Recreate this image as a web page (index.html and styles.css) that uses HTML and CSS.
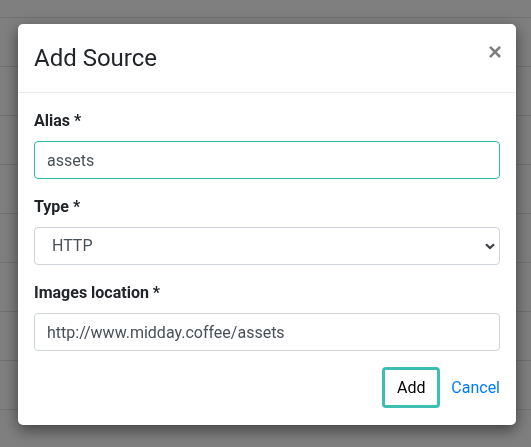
FILE: index.html
```html
<!DOCTYPE html>
<html lang="en">
<head>
<meta charset="utf-8">
<title>Add Source</title>
<link rel="stylesheet" href="styles.css">
</head>
<body>
<div class="page">
  <div class="row"></div>
  <div class="row"></div>
  <div class="row"></div>
  <div class="row"></div>
  <div class="row"></div>
  <div class="row"></div>
  <div class="row"></div>
  <div class="row"></div>
  <div class="row"></div>
</div>
<div class="backdrop"></div>
<div class="modal">
  <div class="modal-dialog">
    <div class="modal-header">
      <h4 class="modal-title">Add Source</h4>
      <button class="close" type="button" aria-label="Close">×</button>
    </div>
    <form class="modal-body">
      <div class="form-group">
        <label class="label" for="alias">Alias *</label>
        <input id="alias" class="form-control focused" type="text" value="assets">
      </div>
      <div class="form-group">
        <label class="label" for="type">Type *</label>
        <div class="select-wrap">
          <select id="type" class="form-control select">
            <option>HTTP</option>
          </select>
          <svg class="chevron" width="10" height="7" viewBox="0 0 10 7"><path d="M1 1.2 L5 5 L9 1.2" fill="none" stroke="#3b3f44" stroke-width="2.2"/></svg>
        </div>
      </div>
      <div class="form-group">
        <label class="label" for="loc">Images location *</label>
        <input id="loc" class="form-control" type="text" value="http://www.midday.coffee/assets">
      </div>
      <div class="actions">
        <button class="btn-add" type="button">Add</button>
        <a class="cancel" href="#">Cancel</a>
      </div>
    </form>
  </div>
</div>
</body>
</html>
```

FILE: styles.css
```css
* { box-sizing: border-box; }
html, body { margin: 0; padding: 0; }
body {
  font-family: Roboto, "Liberation Sans", sans-serif;
  font-size: 16px;
  line-height: 1.5;
  color: #212529;
  background: #fff;
  width: 531px;
  height: 447px;
  overflow: hidden;
}
.page {
  height: 447px;
  overflow: hidden;
  padding-top: 17px;
}
.row {
  height: 49px;
  border-top: 1px solid #dee2e6;
}
.backdrop {
  position: fixed;
  inset: 0;
  background: rgba(0, 0, 0, 0.5);
}
.modal {
  position: fixed;
  inset: 0;
  display: flex;
  align-items: flex-start;
  padding: 24px 0 0 18px;
}
.modal-dialog {
  width: 498px;
  background: #fff;
  border-radius: 5px;
  box-shadow: 0 5px 15px rgba(0, 0, 0, 0.5);
}
.modal-header {
  display: flex;
  align-items: flex-start;
  justify-content: space-between;
  padding: 16px;
  border-bottom: 1px solid #e9ecef;
}
.modal-title {
  margin: 0;
  font-size: 24px;
  font-weight: 400;
  line-height: 36px;
}
.close {
  background: none;
  border: 0;
  padding: 0;
  margin: 0 -2px 0 0;
  font-family: "Liberation Sans", Arial, sans-serif;
  font-size: 24px;
  font-weight: 700;
  line-height: 24px;
  color: #000;
  opacity: 0.5;
  cursor: pointer;
}
.modal-body {
  display: flex;
  flex-direction: column;
  padding: 16px 16px 17px;
  margin: 0;
}
.form-group {
  display: flex;
  flex-direction: column;
  margin-bottom: 16px;
}
.label {
  font-weight: 700;
  line-height: 24px;
  margin-bottom: 8px;
}
.form-control {
  height: 38px;
  width: 100%;
  padding: 6px 12px;
  font-family: Roboto, "Liberation Sans", sans-serif;
  font-size: 16px;
  line-height: 24px;
  color: #495057;
  background: #fff;
  border: 1px solid #ced4da;
  border-radius: 4px;
  outline: none;
}
.form-control.focused {
  border-color: #2bbaa7;
}
.select-wrap {
  position: relative;
}
.select {
  appearance: none;
  -webkit-appearance: none;
  padding-left: 17px;
}
.chevron {
  position: absolute;
  right: 5px;
  top: 16px;
  pointer-events: none;
}
.actions {
  display: flex;
  justify-content: flex-end;
  align-items: center;
  gap: 11px;
}
.btn-add {
  height: 41px;
  width: 58px;
  padding: 0;
  font-family: Roboto, "Liberation Sans", sans-serif;
  font-size: 16px;
  color: #000;
  background: #fff;
  border: 3px solid #3cbfb0;
  border-radius: 4px;
  cursor: pointer;
}
.cancel {
  color: #007bff;
  text-decoration: none;
  line-height: 24px;
}
```
